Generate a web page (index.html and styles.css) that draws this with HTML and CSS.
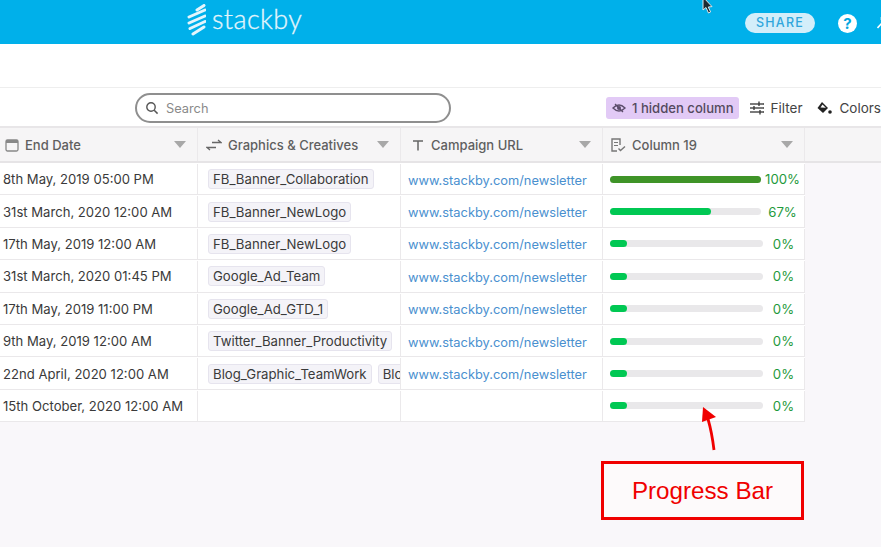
FILE: index.html
```html
<!DOCTYPE html>
<html lang="en">

<head>
    <meta charset="UTF-8">
    <title>Stackby</title>
    <link rel="stylesheet" href="styles.css">
</head>

<body>
    <header class="topbar">
        <div class="logo">
            <svg class="logo-mark" viewBox="0 0 20 32" width="20" height="32">
                <g stroke="#e4f5fc" stroke-width="3" stroke-linecap="round">
                    <line x1="11" y1="6" x2="18" y2="1.5"/>
                    <line x1="3" y1="13" x2="19" y2="6"/>
                    <line x1="3" y1="19" x2="19" y2="12"/>
                    <line x1="4" y1="24.5" x2="19" y2="17.5"/>
                    <line x1="7" y1="30" x2="18" y2="23"/>
                </g>
            </svg>
            <span class="logo-text">stackby</span>
        </div>
        <div class="share">SHARE</div>
        <div class="help">?</div>
        <svg class="cursor" viewBox="0 0 12 16" width="12" height="16">
            <path d="M1 -3 L1 10 L4 7.5 L6.5 13 L8.6 12 L6.3 7 L10 6.6 Z" fill="#1c2b33" stroke="#dfe6ea" stroke-width="1"/>
        </svg>
        <svg class="user" viewBox="0 0 6 12" width="6" height="12">
            <path d="M4.5 0 L4.5 3 M0.5 11 L5 6" stroke="#fff" stroke-width="1.6" fill="none"/>
        </svg>
    </header>

    <div class="subbar"></div>

    <div class="toolbar">
        <div class="search">
            <svg viewBox="0 0 14 14" width="14" height="14">
                <circle cx="6" cy="6" r="4.2" fill="none" stroke="#555" stroke-width="1.4"/>
                <line x1="9.2" y1="9.2" x2="12.6" y2="12.6" stroke="#555" stroke-width="1.5"/>
            </svg>
            <span>Search</span>
        </div>
        <div class="hidden-btn">
            <svg viewBox="0 0 14 12" width="14" height="12">
                <path d="M1 6 Q7 0 13 6 Q7 12 1 6 Z" fill="none" stroke="#5c4d6b" stroke-width="1.4"/>
                <circle cx="7" cy="6" r="2" fill="#5c4d6b"/>
                <line x1="3" y1="2" x2="11" y2="10" stroke="#5c4d6b" stroke-width="1.2"/>
            </svg>
            <span>1 hidden column</span>
        </div>
        <div class="tool filter">
            <svg viewBox="0 0 14 14" width="14" height="14">
                <g stroke="#333" stroke-width="1.3">
                    <line x1="0" y1="3" x2="14" y2="3"/>
                    <line x1="0" y1="7" x2="14" y2="7"/>
                    <line x1="0" y1="11" x2="14" y2="11"/>
                    <line x1="9" y1="0.5" x2="9" y2="5"/>
                    <line x1="4" y1="5" x2="4" y2="9"/>
                    <line x1="10" y1="9" x2="10" y2="13.5"/>
                </g>
            </svg>
            <span>Filter</span>
        </div>
        <div class="tool colors">
            <svg viewBox="0 0 16 14" width="16" height="14">
                <path d="M6 1 L12 7 L7 12 L1.5 7 Z" fill="#222"/>
                <path d="M4.5 6.5 L6.5 3.5 L9.8 6.8 Z" fill="#fff"/>
                <circle cx="14" cy="11" r="1.8" fill="#222"/>
            </svg>
            <span>Colors</span>
        </div>
    </div>

    <div class="table">
        <div class="row head">
            <div class="cell col-date">
                <svg class="type-icon" viewBox="0 0 14 14" width="14" height="14">
                    <rect x="1" y="2" width="12" height="11" rx="1.5" fill="none" stroke="#888" stroke-width="1.3"/>
                    <rect x="1" y="2" width="12" height="3" fill="#888"/>
                </svg>
                <span class="head-label">End Date</span>
                <i class="caret"></i>
            </div>
            <div class="cell col-link">
                <svg class="type-icon" viewBox="0 0 16 12" width="16" height="12">
                    <path d="M6 3.5 H15 M12 1 L15 3.5 L12 3.5 M10 8.5 H1 M4 11 L1 8.5 L4 8.5" fill="none" stroke="#666" stroke-width="1.3"/>
                </svg>
                <span class="head-label">Graphics &amp; Creatives</span>
                <i class="caret"></i>
            </div>
            <div class="cell col-url">
                <svg class="type-icon" viewBox="0 0 12 12" width="12" height="12">
                    <path d="M1 2 H11 M6 2 V11.5" fill="none" stroke="#666" stroke-width="1.5"/>
                </svg>
                <span class="head-label">Campaign URL</span>
                <i class="caret"></i>
            </div>
            <div class="cell col-prog">
                <svg class="type-icon" viewBox="0 0 16 14" width="16" height="14">
                    <path d="M7 13 H2 V1 H10 V7" fill="none" stroke="#777" stroke-width="1.4"/>
                    <path d="M4 4.5 H8 M4 7.5 H8" stroke="#777" stroke-width="1.2"/>
                    <path d="M8.5 10.5 L10.5 12.5 L15 8.5" fill="none" stroke="#777" stroke-width="1.4"/>
                </svg>
                <span class="head-label">Column 19</span>
                <i class="caret"></i>
            </div>
            <div class="cell col-rest"></div>
        </div>

        <div class="row">
            <div class="cell col-date">8th May, 2019 05:00 PM</div>
            <div class="cell col-link"><span class="tag">FB_Banner_Collaboration</span></div>
            <div class="cell col-url"><span class="url">www.stackby.com/newsletter</span></div>
            <div class="cell col-prog">
                <div class="track"><div class="fill full" style="width: 100%"></div></div>
                <span class="pct">100%</span>
            </div>
        </div>
        <div class="row">
            <div class="cell col-date">31st March, 2020 12:00 AM</div>
            <div class="cell col-link"><span class="tag">FB_Banner_NewLogo</span></div>
            <div class="cell col-url"><span class="url">www.stackby.com/newsletter</span></div>
            <div class="cell col-prog">
                <div class="track"><div class="fill" style="width: 67%"></div></div>
                <span class="pct">67%</span>
            </div>
        </div>
        <div class="row">
            <div class="cell col-date">17th May, 2019 12:00 AM</div>
            <div class="cell col-link"><span class="tag">FB_Banner_NewLogo</span></div>
            <div class="cell col-url"><span class="url">www.stackby.com/newsletter</span></div>
            <div class="cell col-prog">
                <div class="track empty"><div class="fill zero"></div></div>
                <span class="pct">0%</span>
            </div>
        </div>
        <div class="row">
            <div class="cell col-date">31st March, 2020 01:45 PM</div>
            <div class="cell col-link"><span class="tag">Google_Ad_Team</span></div>
            <div class="cell col-url"><span class="url">www.stackby.com/newsletter</span></div>
            <div class="cell col-prog">
                <div class="track empty"><div class="fill zero"></div></div>
                <span class="pct">0%</span>
            </div>
        </div>
        <div class="row">
            <div class="cell col-date">17th May, 2019 11:00 PM</div>
            <div class="cell col-link"><span class="tag">Google_Ad_GTD_1</span></div>
            <div class="cell col-url"><span class="url">www.stackby.com/newsletter</span></div>
            <div class="cell col-prog">
                <div class="track empty"><div class="fill zero"></div></div>
                <span class="pct">0%</span>
            </div>
        </div>
        <div class="row">
            <div class="cell col-date">9th May, 2019 12:00 AM</div>
            <div class="cell col-link"><span class="tag">Twitter_Banner_Productivity</span></div>
            <div class="cell col-url"><span class="url">www.stackby.com/newsletter</span></div>
            <div class="cell col-prog">
                <div class="track empty"><div class="fill zero"></div></div>
                <span class="pct">0%</span>
            </div>
        </div>
        <div class="row">
            <div class="cell col-date">22nd April, 2020 12:00 AM</div>
            <div class="cell col-link"><span class="tag">Blog_Graphic_TeamWork</span><span class="tag">Blog_Graphic</span></div>
            <div class="cell col-url"><span class="url">www.stackby.com/newsletter</span></div>
            <div class="cell col-prog">
                <div class="track empty"><div class="fill zero"></div></div>
                <span class="pct">0%</span>
            </div>
        </div>
        <div class="row">
            <div class="cell col-date">15th October, 2020 12:00 AM</div>
            <div class="cell col-link"></div>
            <div class="cell col-url"></div>
            <div class="cell col-prog">
                <div class="track empty"><div class="fill zero"></div></div>
                <span class="pct">0%</span>
            </div>
        </div>
    </div>

    <!-- annotation on top of the video frame -->
    <svg class="arrow" viewBox="0 0 24 50" width="24" height="50">
        <path d="M14 47 Q12 30 8 16" fill="none" stroke="#f00000" stroke-width="2.8"/>
        <path d="M3 4 L2 19 L16 14 Z" fill="#f00000"/>
    </svg>
    <div class="callout">Progress Bar</div>
</body>

</html>
```

FILE: styles.css
```css
* {
    box-sizing: border-box;
}

html, body {
    height: 100%;
}

body {
    margin: 0;
    overflow: hidden;
    background-color: #f9f7fa;
    font-family: "Inter", "Liberation Sans", sans-serif;
    color: #3a3a3a;
}

/* Blue top bar */
.topbar {
    position: relative;
    display: flex;
    align-items: center;
    height: 44px;
    padding-top: 2px;
    background-color: #00b0ea;
}

.logo {
    display: flex;
    align-items: center;
    width: 121px;
    margin-left: 186px;
    margin-top: -7px;
}

.logo-mark {
    flex: none;
}

.logo-text {
    margin-left: 6px;
    margin-top: -3px;
    font-family: "Lato", sans-serif;
    font-size: 27px;
    font-weight: 300;
    letter-spacing: 0.4px;
    color: #e4f5fc;
    -webkit-text-stroke: 0.3px #e4f5fc;
}

.share {
    margin-left: 438px;
    width: 70px;
    height: 20px;
    border-radius: 10px;
    background-color: #d3eefa;
    color: #2fa6dc;
    font-size: 12.5px;
    font-weight: 500;
    letter-spacing: 1.2px;
    line-height: 20px;
    text-align: center;
}

.help {
    margin-left: 23px;
    width: 19px;
    height: 19px;
    border-radius: 50%;
    background-color: #fff;
    color: #00a6e0;
    font-size: 15px;
    font-weight: 700;
    line-height: 19px;
    text-align: center;
}

.cursor {
    position: absolute;
    left: 702px;
    top: 0;
}

.user {
    position: absolute;
    left: 877px;
    top: 17px;
}

.subbar {
    height: 44px;
    background-color: #fff;
    border-bottom: 1px solid #eeeeee;
}

/* Search + view tools */
.toolbar {
    display: flex;
    align-items: center;
    height: 40px;
    padding-top: 2px;
    background-color: #fff;
    border-bottom: 2px solid #e8e6e8;
    white-space: nowrap;
}

.search {
    display: flex;
    align-items: center;
    gap: 7px;
    width: 317px;
    height: 30px;
    margin-left: 135px;
    padding-left: 8px;
    border: 2px solid #8f8f8f;
    border-radius: 15px;
    font-size: 12.8px;
    color: #8a8a8a;
}

.hidden-btn {
    display: flex;
    align-items: center;
    gap: 6px;
    height: 22px;
    margin-left: 155px;
    padding: 0 5px 0 6px;
    border-radius: 3px;
    background-color: #e2caf6;
    color: #544a5e;
    font-size: 13.1px;
    font-weight: 500;
}

.tool {
    display: flex;
    align-items: center;
    gap: 7px;
    font-size: 13.5px;
    color: #444;
}

.filter {
    margin-left: 11px;
}

.colors {
    margin-left: 14px;
}

/* Table */
.table {
    width: 881px;
}

.row {
    display: flex;
    width: 805px;
    height: 32.4px;
    padding-top: 1px;
    background-color: #fff;
    border-bottom: 1px solid #eae8ea;
    font-size: 13.1px;
}

.row.head {
    width: 881px;
    height: 35px;
    padding-top: 0;
    background-color: #f6f5f6;
    border-bottom: 2px solid #e6e4e6;
    color: #5f5f5f;
    font-size: 13px;
    font-weight: 500;
}

.cell {
    display: flex;
    flex: none;
    align-items: center;
    overflow: hidden;
    white-space: nowrap;
    border-right: 1px solid #ebe9eb;
}

.col-date {
    width: 198px;
    padding-left: 3px;
}

.col-link {
    width: 203px;
    padding-left: 10px;
    gap: 6px;
}

.col-url {
    width: 202px;
    padding-left: 7px;
}

.col-prog {
    width: 202px;
    padding-left: 7px;
}

.col-rest {
    flex: 1;
    border-right: none;
}

.head .col-date {
    padding-left: 5px;
}

.head .col-link {
    padding-left: 8px;
    gap: 0;
}

.head .col-url {
    padding-left: 11px;
}

.type-icon {
    flex: none;
    margin-right: 6px;
}

.head .col-url .type-icon {
    margin-right: 7px;
}

.head-label {
    flex: 1;
}

.caret {
    flex: none;
    width: 0;
    height: 0;
    margin-right: 11px;
    border-left: 6px solid transparent;
    border-right: 6px solid transparent;
    border-top: 7px solid #a8a8a8;
}

.tag {
    flex: none;
    height: 20px;
    padding: 0 4px;
    border: 1px solid #e6e4ee;
    border-radius: 3px;
    background-color: #f4f3f8;
    font-size: 13.2px;
    line-height: 18px;
}

.url {
    margin-top: 2px;
    color: #4a90cf;
    font-size: 12.85px;
}

.track {
    flex: none;
    width: 151px;
    height: 7px;
    border-radius: 4px;
    background-color: #e9e8ea;
}

.track.empty {
    width: 153px;
}

.fill {
    height: 100%;
    border-radius: 4px;
    background-color: #00c853;
}

.fill.full {
    background-color: #3f9428;
}

.fill.zero {
    width: 17px;
}

.pct {
    flex: 1;
    color: #1f9a3c;
    font-size: 13.2px;
    text-align: center;
}

/* Annotation */
.arrow {
    position: absolute;
    left: 700px;
    top: 403px;
}

.callout {
    position: absolute;
    left: 601px;
    top: 461px;
    width: 203px;
    height: 59px;
    border: 3px solid #f00000;
    background-color: #fdfafb;
    color: #f00000;
    font-family: "Liberation Sans", sans-serif;
    font-size: 24.2px;
    line-height: 54px;
    text-align: center;
}
```
